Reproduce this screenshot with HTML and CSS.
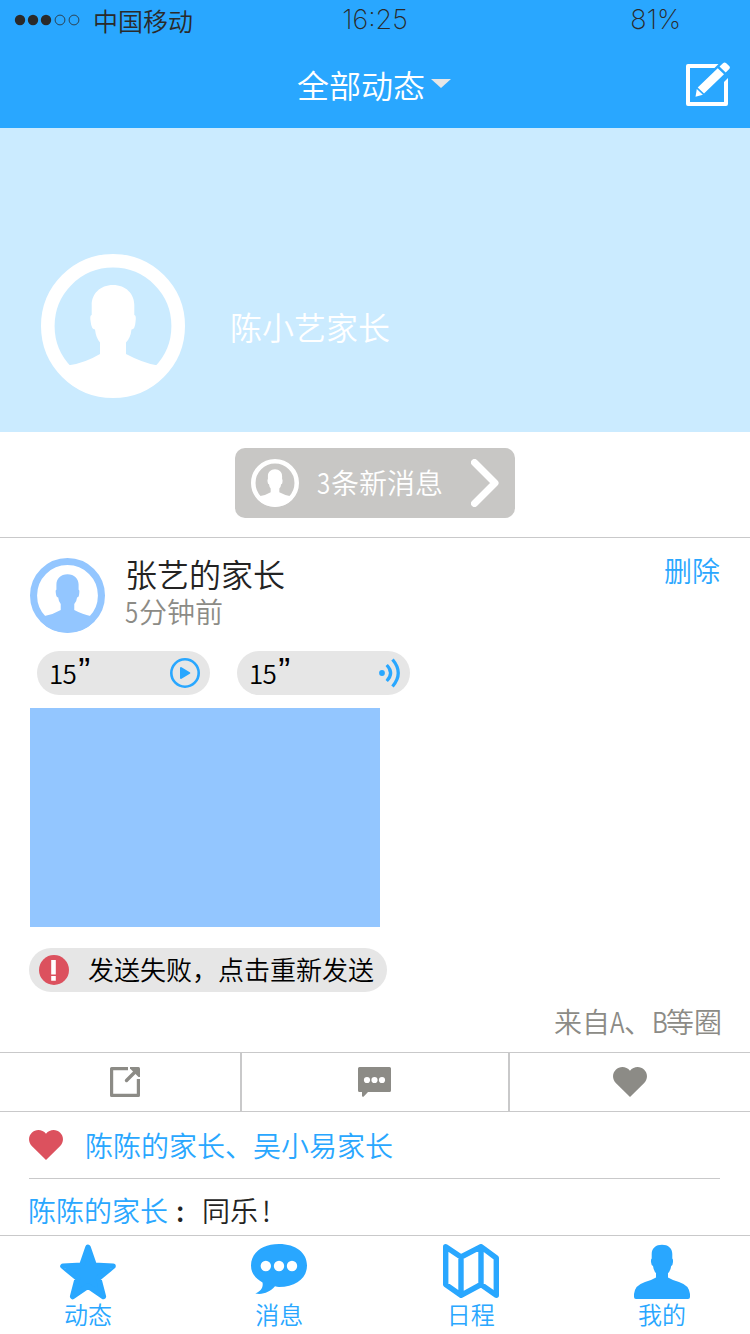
FILE: index.html
```html
<!DOCTYPE html>
<html lang="zh-CN">
<head>
<meta charset="utf-8">
<title>全部动态</title>
<link rel="stylesheet" href="styles.css">
</head>
<body>
<svg class="defs" width="0" height="0">
  <symbol id="avatar" viewBox="0 0 144 144">
    <circle cx="72" cy="72" r="65.2" fill="none" stroke="currentColor" stroke-width="13.6"/>
    <path fill="currentColor" d="M72 31C59 31 50.700 40 50.700 51V61Q48.500 61 49.700 68Q50.500 75.500 54 75.500Q55 84 59 88.500V100Q44 109 28 111.300L20 121Q40 143 72 143T124 121L115.700 111.300Q102 109 85 100V88.500Q89.500 84 90.500 75.500Q94 75.500 94.500 68Q95.500 61 93.300 61V51C93.300 40 85 31 72 31Z"/>
  </symbol>
  <symbol id="heart" viewBox="0 0 34 30">
    <path fill="currentColor" d="M17 30L2.800 16C-.9 12.200-.9 6.400 2.800 2.700C6.700-1 13.300-.9 17 3.800C20.700-.9 27.300-1 31.200 2.700C34.900 6.400 34.900 12.200 31.200 16Z"/>
  </symbol>
</svg>

<header class="header">
  <div class="status">
    <div class="carrier">
      <svg class="signal" width="66" height="12" viewBox="0 0 66 12">
        <g fill="#2a2a2a"><circle cx="6" cy="6" r="5.200"/><circle cx="19" cy="6" r="5.200"/><circle cx="32" cy="6" r="5.200"/></g>
        <g fill="none" stroke="#2a2a2a" stroke-width=".8"><circle cx="46" cy="6" r="4.900"/><circle cx="60" cy="6" r="4.900"/></g>
      </svg>
      <span>中国移动</span>
    </div>
    <span class="clock">16:25</span>
    <span class="battery">81%</span>
  </div>
  <div class="nav">
    <div class="nav-title">全部动态<i class="caret"></i></div>
    <svg class="edit" width="44" height="44" viewBox="0 0 44 44">
      <path fill="#fff" d="M2 2H32.500L28.500 6H4V40H38V20L42 16V42Q42 44 40 44H2Q0 44 0 42V4Q0 2 2 2Z"/>
      <path fill="#fff" d="M31.700 6.200L38 12.300L18 31.500L11.700 25.400ZM10.800 27L16.900 32.800L9.500 34.800ZM33.500 4.500L37 1.200Q38.500-.3 40 1L43.200 4Q44.600 5.400 43.200 6.900L39.700 10.500Z"/>
    </svg>
  </div>
</header>

<section class="hero">
  <svg class="hero-avatar"><use href="#avatar"/></svg>
  <span class="hero-name">陈小艺家长</span>
</section>

<section class="notice">
  <div class="notice-btn">
    <svg class="notice-avatar"><use href="#avatar"/></svg>
    <span class="notice-text"><span class="half">3</span>条新消息</span>
    <svg width="28" height="48" viewBox="0 0 28 48"><path d="M3.500 3.500L24 24L3.500 44.500" fill="none" stroke="#fff" stroke-width="7" stroke-linecap="round" stroke-linejoin="round"/></svg>
  </div>
</section>

<article class="post">
  <div class="post-head">
    <svg class="post-avatar"><use href="#avatar"/></svg>
    <div class="author">
      <div class="author-name">张艺的家长</div>
      <div class="author-time"><span class="half">5</span>分钟前</div>
    </div>
    <span class="delete">删除</span>
  </div>
  <div class="voices">
    <div class="voice"><span class="duration">15<span class="quote">”</span></span>
      <svg width="30" height="30" viewBox="0 0 30 30"><circle cx="15" cy="15" r="13.700" fill="none" stroke="#29a7ff" stroke-width="2.600"/><path d="M11 10V20L19.300 15Z" fill="#29a7ff" stroke="#29a7ff" stroke-width="2" stroke-linejoin="round"/></svg>
    </div>
    <div class="voice"><span class="duration">15<span class="quote">”</span></span>
      <svg width="30" height="30" viewBox="0 0 30 30"><circle cx="12" cy="15" r="2.900" fill="#29a7ff"/><path d="M16.700 7Q24.500 15 16.700 23M22.500 1.500Q34 15 22.500 28.500" fill="none" stroke="#29a7ff" stroke-width="3.200"/></svg>
    </div>
  </div>
  <div class="photo"></div>
  <div class="failed">
    <svg width="30" height="30" viewBox="0 0 30 30"><circle cx="15" cy="15" r="15" fill="#dc515e"/><path fill="#fff" d="M12.200 5H16.800V19.500H12.200ZM12.200 21H16.800V25.700H12.200Z"/></svg>
    <span>发送失败，点击重新发送</span>
  </div>
  <div class="source">来自<span class="half">A</span>、<span class="half">B</span>等圈</div>
</article>

<div class="actions">
  <div class="action action-share">
    <svg width="30" height="30" viewBox="0 0 30 30"><path d="M18 1.600H1.600V28.400H28.400V12" fill="none" stroke="#8c8b86" stroke-width="3.200" stroke-linejoin="round"/><path d="M16.500 13.500L26 4" stroke="#8c8b86" stroke-width="3.400" stroke-linecap="round"/><path d="M20 0H28.500Q30 0 30 1.500V10H28.500L20 1.500Z" fill="#8c8b86"/></svg>
  </div>
  <div class="action action-comment">
    <svg width="33" height="30" viewBox="0 0 33 30"><path d="M1.500 0H31.500Q33 0 33 1.500V23.500Q33 25 31.500 25H10L5.500 29.700Q4 30.300 4 28.500V25H1.500Q0 25 0 23.500V1.500Q0 0 1.500 0Z" fill="#8c8b86"/><g fill="#fff"><circle cx="9" cy="13" r="3.100"/><circle cx="16.500" cy="13" r="3.100"/><circle cx="24" cy="13" r="3.100"/></g></svg>
  </div>
  <div class="action"><svg class="heart gray"><use href="#heart"/></svg></div>
</div>

<section class="feedback">
  <div class="likes"><svg class="heart red"><use href="#heart"/></svg><span>陈陈的家长、吴小易家长</span></div>
  <div class="comment"><span class="comment-author">陈陈的家长</span><span class="colon">:</span><span>同乐</span><span class="bang">!</span></div>
</section>

<nav class="tabs">
  <div class="tab">
    <svg width="56" height="56" viewBox="0 0 56 56"><path d="M28 3.500L34.200 21.300L53 22.200L38.500 34L43.300 52.500L28 42L12.700 52.500L17.500 34L3 22.200L21.800 21.300Z" fill="#29a7ff" stroke="#29a7ff" stroke-width="5.600" stroke-linejoin="round"/></svg>
    <span>动态</span>
  </div>
  <div class="tab">
    <svg width="56" height="56" viewBox="0 0 56 56"><path d="M28 0C45 0 56 9 56 21.500S45 43 28 43Q26 43 24 42.300C19 48 12 51 4.300 49.500C10 47 12.500 43 11.500 38.500C4 34 0 29 0 21.500C0 9 11 0 28 0Z" fill="#29a7ff"/><g fill="#fff"><circle cx="14.800" cy="22" r="5.200"/><circle cx="28" cy="22" r="5.200"/><circle cx="41" cy="22" r="5.200"/></g></svg>
    <span>消息</span>
  </div>
  <div class="tab">
    <svg width="56" height="56" viewBox="0 0 56 56"><path d="M2.700 2.700L18 13L38 2.700L53.300 14V51.300L38 40.500L18 51.300L2.700 40.500ZM18 13V51M38 3V41" fill="none" stroke="#29a7ff" stroke-width="5.400" stroke-linejoin="round"/></svg>
    <span>日程</span>
  </div>
  <div class="tab">
    <svg width="56" height="56" viewBox="0 0 56 56"><path d="M28 .7C22 .7 17.700 4 17.700 10V14.500Q16.800 15 17 18Q17.300 21.500 19 22Q19.500 26.500 22 29.300V33.500Q18 36 11 38Q1 41 0 50V53Q0 55 2 55H54Q56 55 56 53V50Q55 41 45 38Q38 36 34 33.500V29.300Q36.700 26.500 37.200 22Q38.800 21.500 39 18Q39.200 15 38.300 14.500V10C38.300 4 34 .7 28 .7Z" fill="#29a7ff"/></svg>
    <span>我的</span>
  </div>
</nav>
</body>
</html>
```
FILE: styles.css
```css
* { box-sizing: border-box; }
body {
  margin: 0;
  width: 750px;
  height: 1334px;
  display: flex;
  flex-direction: column;
  overflow: hidden;
  background: #fff;
  color: #232323;
  font-family: "Noto Sans CJK SC", sans-serif;
  font-weight: 350;
}
svg { display: block; flex: none; }
.defs { position: absolute; }

.header { height: 128px; background: #29a7ff; }
.status {
  height: 40px;
  display: grid;
  grid-template-columns: 1fr auto 1fr;
  align-items: center;
  padding: 0 69px 0 14px;
  color: #2a2a2a;
  font-size: 25px;
  line-height: 38px;
}
.carrier { display: flex; align-items: center; gap: 13px; }
.clock, .battery { font-family: Inter, sans-serif; font-weight: 200; font-size: 27px; line-height: 40px; }
.clock { margin-left: 55px; }
.battery { text-align: right; }
.nav {
  height: 88px;
  display: flex;
  justify-content: space-between;
  padding: 0 20px 0 297px;
  color: #fff;
}
.nav-title { display: flex; align-items: center; gap: 6px; height: 87px; font-size: 32px; }
.caret { border: 10px solid transparent; border-top: 9px solid #e6e6e6; border-bottom: 0; }
.edit { margin-top: 22px; }

.hero {
  height: 304px;
  display: flex;
  align-items: center;
  gap: 45px;
  padding: 92px 41px 0;
  background: #cbebff;
  color: #fff;
  font-size: 32px;
}
.hero-avatar { width: 144px; height: 144px; }
.hero-name { padding-bottom: 1px; }

.notice { height: 106px; padding-top: 16px; border-bottom: 1px solid #c9c9ca; }
.notice-btn {
  width: 280px;
  height: 70px;
  margin: 0 auto;
  padding: 0 16px;
  display: flex;
  align-items: center;
  border-radius: 10px;
  background: #c8c7c5;
  color: #fff;
  font-size: 28px;
}
.notice-avatar { width: 48px; height: 48px; margin-right: 18px; }
.notice-text { flex: 1; padding-bottom: 2px; }
.half { display: inline-block; width: 14px; transform: scaleX(.86); transform-origin: left; }

.post { height: 514px; padding: 20px 30px 0; }
.post-head { display: flex; height: 93px; }
.post-avatar { width: 75px; height: 75px; color: #93c6ff; }
.author { flex: 1; padding-left: 20px; }
.author-name { font-size: 32px; line-height: 30px; }
.author-time { margin-top: 3px; font-size: 28px; line-height: 40px; color: #8c8b86; }
.delete { font-size: 28px; line-height: 25px; color: #29a7ff; }
.voices { display: flex; gap: 27px; padding-left: 7px; }
.voice {
  width: 173px;
  height: 44px;
  padding: 0 10px 0 12px;
  display: flex;
  align-items: center;
  justify-content: space-between;
  border-radius: 22px;
  background: #e6e6e6;
  color: #000;
  font-size: 26px;
}
.duration { padding-bottom: 1px; letter-spacing: -.7px; }
.quote { padding-left: 2px; font-family: "Liberation Sans", sans-serif; font-size: 36px; line-height: 26px; }
.photo { width: 350px; height: 219px; margin-top: 13px; background: #93c6ff; }
.failed {
  width: 358px;
  height: 44px;
  margin: 21px 0 0 -1px;
  padding-left: 10px;
  display: flex;
  align-items: center;
  gap: 19px;
  border-radius: 22px;
  background: #e6e6e6;
  color: #000;
  font-size: 26px;
  white-space: nowrap;
}
.failed span { padding-bottom: 3px; }
.source { margin: 9px -2px 0 0; text-align: right; font-size: 28px; line-height: 40px; color: #8c8b86; }

.actions {
  height: 60px;
  display: grid;
  grid-template-columns: 242px 268px 240px;
  border: solid #c9c9ca;
  border-width: 1px 0;
}
.action { display: flex; align-items: center; justify-content: center; }
.action + .action { box-shadow: -2px 0 0 #c9c9ca; }
.action-share { padding-left: 8px; }
.action-comment { padding-right: 3px; }
.heart { width: 34px; height: 30px; }
.gray { color: #8c8b86; }
.red { color: #dc515e; }

.feedback { height: 123px; padding: 0 30px 0 28px; font-size: 28px; }
.likes {
  height: 67px;
  margin-left: 1px;
  display: flex;
  align-items: center;
  gap: 22px;
  border-bottom: 1px solid #c9c9ca;
  color: #29a7ff;
}
.likes span { padding-bottom: 1px; }
.comment { height: 62px; display: flex; align-items: center; }
.comment-author { color: #29a7ff; }
.colon { width: 34px; padding-left: 8px; font-weight: 500; }
.bang { padding-left: 4px; }

.tabs {
  height: 99px;
  padding: 8px 60px 0;
  display: flex;
  justify-content: space-between;
  border-top: 1px solid #c9c9ca;
  color: #29a7ff;
}
.tab { width: 56px; display: flex; flex-direction: column; align-items: center; font-size: 24px; line-height: 28px; }
```
